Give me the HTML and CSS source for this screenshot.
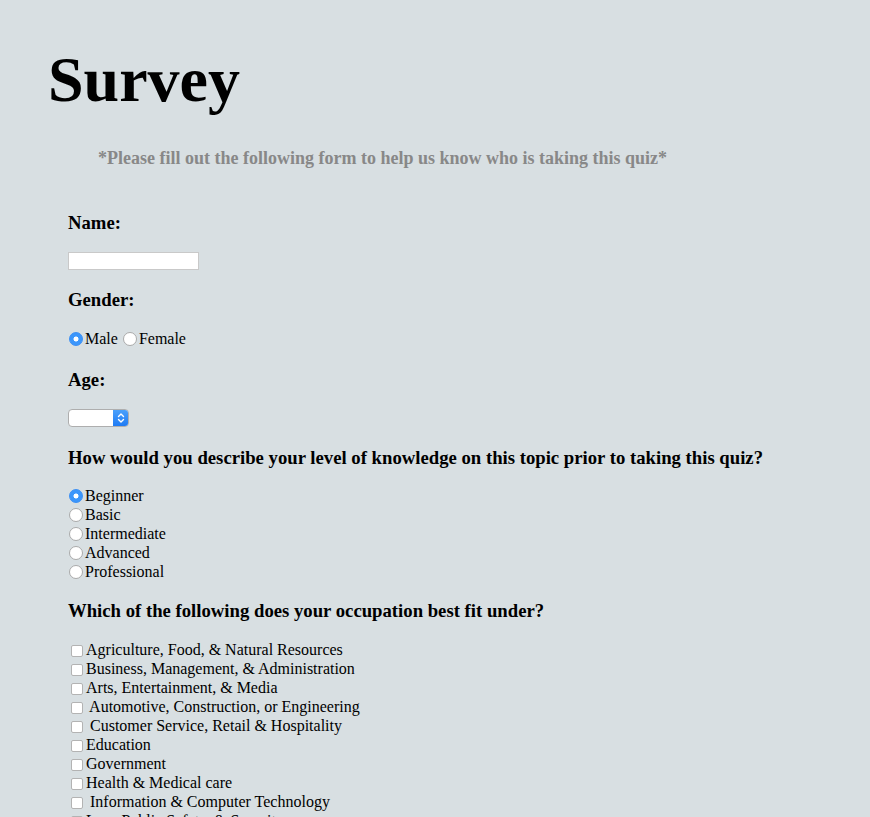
FILE: index.html
```html
<!DOCTYPE html>
<html lang="en">
<head>
<meta charset="utf-8">
<title>Survey</title>
<link rel="stylesheet" href="styles.css">
</head>
<body>
<h1 class="title">Survey</h1>
<p class="subtitle">*Please fill out the following form to help us know who is taking this quiz*</p>
<form class="form">
  <h3 class="label">Name:</h3>
  <input class="text-input" type="text">

  <h3 class="label gap-top">Gender:</h3>
  <div class="row inline-row"><input class="radio" type="radio" name="gender" checked>Male <input class="radio" type="radio" name="gender">Female</div>

  <h3 class="label gap-top-l">Age:</h3>
  <div class="select">
    <span class="select-field"></span>
    <span class="select-arrows">
      <svg width="14" height="16" viewBox="0 0 14 16"><path d="M4.5 6.5 L7 4 L9.5 6.5 M4.5 9.5 L7 12 L9.5 9.5" fill="none" stroke="#fff" stroke-width="1.4" stroke-linecap="round" stroke-linejoin="round"/></svg>
    </span>
  </div>

  <h3 class="label gap-top-q">How would you describe your level of knowledge on this topic prior to taking this quiz?</h3>
  <div class="list list-tight">
    <div class="row"><input class="radio" type="radio" name="level" checked>Beginner</div>
    <div class="row"><input class="radio" type="radio" name="level">Basic</div>
    <div class="row"><input class="radio" type="radio" name="level">Intermediate</div>
    <div class="row"><input class="radio" type="radio" name="level">Advanced</div>
    <div class="row"><input class="radio" type="radio" name="level">Professional</div>
  </div>

  <h3 class="label gap-top">Which of the following does your occupation best fit under?</h3>
  <div class="list">
    <div class="row"><input class="check" type="checkbox">Agriculture, Food, &amp; Natural Resources</div>
    <div class="row"><input class="check" type="checkbox">Business, Management, &amp; Administration</div>
    <div class="row"><input class="check" type="checkbox">Arts, Entertainment, &amp; Media</div>
    <div class="row"><input class="check" type="checkbox"> Automotive, Construction, or Engineering</div>
    <div class="row"><input class="check" type="checkbox"> Customer Service, Retail &amp; Hospitality</div>
    <div class="row"><input class="check" type="checkbox">Education</div>
    <div class="row"><input class="check" type="checkbox">Government</div>
    <div class="row"><input class="check" type="checkbox">Health &amp; Medical care</div>
    <div class="row"><input class="check" type="checkbox"> Information &amp; Computer Technology</div>
    <div class="row"><input class="check" type="checkbox">Law, Public Safety, &amp; Security</div>
    <div class="row"><input class="check" type="checkbox">Science &amp; Research</div>
    <div class="row"><input class="check" type="checkbox">Student</div>
    <div class="row"><input class="check" type="checkbox">Other</div>
  </div>
</form>
</body>
</html>
```

FILE: styles.css
```css
html, body {
  margin: 0;
  padding: 0;
}
body {
  background: #d8dfe2;
  font-family: "Liberation Serif", "Times New Roman", serif;
  color: #000;
  font-size: 16px;
}
.title {
  margin: 43px 0 0 48px;
  font-size: 64px;
  line-height: 74px;
  font-weight: 700;
}
.subtitle {
  margin: 30px 0 0 98px;
  font-size: 18px;
  line-height: 22px;
  font-weight: 700;
  color: #888;
}
.form {
  margin: 43px 0 0 68px;
}
.label {
  margin: 0 0 18px;
  font-size: 18.72px;
  line-height: 22px;
  font-weight: 700;
}
.gap-top { margin-top: 19px; }
.gap-top-l { margin-top: 21px; }
.gap-top-q { margin-top: 20px; }
.text-input {
  display: block;
  box-sizing: border-box;
  width: 131px;
  height: 18px;
  margin: 0;
  padding: 0 2px;
  border: 1px solid #c9c9c9;
  background: #fff;
  font: 13px "Liberation Sans", sans-serif;
  outline: none;
}
.row {
  height: 19px;
  line-height: 19px;
  white-space: pre;
}
.inline-row {
  margin-top: 1px;
}
.radio {
  -webkit-appearance: none;
  appearance: none;
  display: inline-block;
  box-sizing: border-box;
  width: 14px;
  height: 14px;
  margin: 0 2px 0 1px;
  vertical-align: -2px;
  border: 1px solid #aaa;
  border-radius: 50%;
  background: #fff;
}
.radio:checked {
  border-color: #3a8ff5;
  background: radial-gradient(circle, #fff 0 2.2px, #3b96fb 2.8px);
}
.check {
  -webkit-appearance: none;
  appearance: none;
  display: inline-block;
  box-sizing: border-box;
  width: 12px;
  height: 12px;
  margin: 0 3px 0 3px;
  vertical-align: -2px;
  border: 1px solid #b3b3b3;
  border-radius: 2px;
  background: #fff;
}
.select {
  display: flex;
  width: 61px;
  height: 18px;
  margin-top: 4px;
  box-sizing: border-box;
  border: 1px solid #aeaeae;
  border-radius: 4px;
  overflow: hidden;
  background: #fff;
}
.select-field {
  flex: 1;
}
.select-arrows {
  width: 15px;
  display: flex;
  align-items: center;
  justify-content: center;
  background: linear-gradient(#4aa0fb, #1f7bf4);
}
.list {
  margin: 0;
}
.list-tight {
  margin-top: -1px;
}
```
